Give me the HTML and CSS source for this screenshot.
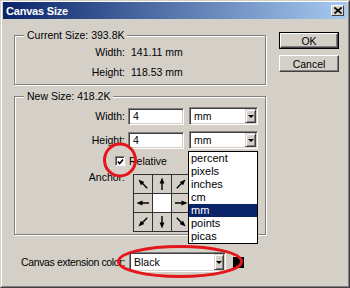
FILE: index.html
```html
<!DOCTYPE html>
<html>
<head>
<meta charset="utf-8">
<link rel="stylesheet" href="styles.css">
</head>
<body>
<div class="window">
  <div class="frame">
    <div class="titlebar">
      <span class="title">Canvas Size</span>
      <span class="close"><svg width="8" height="7" viewBox="0 0 8 7"><path d="M0.5 0.5L7.5 6.5M7.5 0.5L0.5 6.5" stroke="#000" stroke-width="1.6"/></svg></span>
    </div>
    <div class="client">
      <div class="top">
        <div class="groups">
          <div class="group cur">
            <div class="legend">Current Size: 393.8K</div>
            <div class="info"><span class="lbl">Width:</span><span class="val">141.11 mm</span></div>
            <div class="info"><span class="lbl">Height:</span><span class="val">118.53 mm</span></div>
          </div>
          <div class="group new">
            <div class="legend">New Size: 418.2K</div>
            <div class="field first"><span class="lbl">Width:</span><div class="input">4</div><div class="select unit"><span class="stext">mm</span><span class="dd"><i class="tri"></i></span></div></div>
            <div class="field"><span class="lbl">Height:</span><div class="input">4</div><div class="select unit"><span class="stext">mm</span><span class="dd"><i class="tri"></i></span>
              <ul class="list">
                <li>percent</li>
                <li>pixels</li>
                <li>inches</li>
                <li>cm</li>
                <li class="sel">mm</li>
                <li>points</li>
                <li>picas</li>
              </ul>
            </div></div>
            <div class="check"><span class="lbl"><span class="cb"><svg width="8" height="8" viewBox="0 0 8 8"><path d="M1 3.5L3 5.8L7 1.2" fill="none" stroke="#000" stroke-width="1.8"/></svg></span></span><span class="cbtext">Relative</span></div>
            <div class="anchor"><span class="lbl">Anchor:</span>
              <div class="grid">
                <div class="cell"><svg class="arrow r-nw" viewBox="0 0 18 18"><path d="M9 15V7"/><polygon points="9,2.5 6.6,8.5 11.4,8.5"/></svg></div>
                <div class="cell"><svg class="arrow r-n" viewBox="0 0 18 18"><path d="M9 15V7"/><polygon points="9,2.5 6.6,8.5 11.4,8.5"/></svg></div>
                <div class="cell"><svg class="arrow r-ne" viewBox="0 0 18 18"><path d="M9 15V7"/><polygon points="9,2.5 6.6,8.5 11.4,8.5"/></svg></div>
                <div class="cell"><svg class="arrow r-w" viewBox="0 0 18 18"><path d="M9 15V7"/><polygon points="9,2.5 6.6,8.5 11.4,8.5"/></svg></div>
                <div class="cell center"></div>
                <div class="cell"><svg class="arrow r-e" viewBox="0 0 18 18"><path d="M9 15V7"/><polygon points="9,2.5 6.6,8.5 11.4,8.5"/></svg></div>
                <div class="cell"><svg class="arrow r-sw" viewBox="0 0 18 18"><path d="M9 15V7"/><polygon points="9,2.5 6.6,8.5 11.4,8.5"/></svg></div>
                <div class="cell"><svg class="arrow r-s" viewBox="0 0 18 18"><path d="M9 15V7"/><polygon points="9,2.5 6.6,8.5 11.4,8.5"/></svg></div>
                <div class="cell"><svg class="arrow r-se" viewBox="0 0 18 18"><path d="M9 15V7"/><polygon points="9,2.5 6.6,8.5 11.4,8.5"/></svg></div>
              </div>
            </div>
          </div>
        </div>
        <div class="buttons">
          <div class="btn default"><span class="face">OK</span></div>
          <div class="btn"><span class="face">Cancel</span></div>
        </div>
      </div>
      <div class="ext">
        <span class="extlbl">Canvas extension color:</span>
        <div class="select color"><span class="stext">Black</span><span class="dd"><i class="tri"></i></span></div>
        <span class="swatch"></span>
      </div>
    </div>
  </div>
</div>
<svg class="marks" width="350" height="288" viewBox="0 0 350 288">
  <ellipse cx="120" cy="160" rx="15.5" ry="16" fill="none" stroke="#e4161c" stroke-width="3"/>
  <ellipse cx="180" cy="261.5" rx="61.5" ry="15" fill="none" stroke="#e4161c" stroke-width="3"/>
</svg>
</body>
</html>
```

FILE: styles.css
```css
* { box-sizing: border-box; }
html, body { margin: 0; padding: 0; }
body {
  position: relative;
  width: 350px;
  height: 288px;
  overflow: hidden;
  background: #d4d0c8;
  font-family: "Liberation Sans", Arial, sans-serif;
  font-size: 10.5px;
  color: #000;
}
.window {
  width: 350px;
  height: 288px;
  border: 1px solid;
  border-color: #d4d0c8 #404040 #404040 #d4d0c8;
  background: #d4d0c8;
}
.frame {
  height: 100%;
  border: 1px solid;
  border-color: #fff #808080 #808080 #fff;
  padding: 0 1px 1px 1px;
  display: flex;
  flex-direction: column;
}
.titlebar {
  height: 17px;
  flex: none;
  display: flex;
  align-items: center;
  justify-content: space-between;
  background: linear-gradient(to right, #0a246a, #a6caf0);
  padding: 0 3px 0 3px;
}
.title {
  color: #fff;
  font-weight: bold;
  font-size: 11px;
  letter-spacing: -0.2px;
}
.close {
  width: 13px;
  height: 11px;
  display: flex;
  align-items: center;
  justify-content: center;
  background: #d4d0c8;
  border: 1px solid;
  border-color: #fff #404040 #404040 #fff;
}
.client {
  flex: 1;
  padding-left: 11px;
  display: flex;
  flex-direction: column;
}
.top {
  display: flex;
  align-items: flex-start;
}
.groups {
  width: 252px;
  display: flex;
  flex-direction: column;
}
.group {
  border: 1px solid #808080;
  box-shadow: inset 1px 1px 0 #fff, 1px 1px 0 #fff;
  display: flex;
  flex-direction: column;
}
.group.cur { margin-top: 16px; padding-bottom: 2px; }
.group.new { margin-top: 11px; padding-bottom: 2px; }
.legend {
  align-self: flex-start;
  margin: -7px 0 0 9px;
  padding: 0 3px;
  line-height: 13px;
  background: #d4d0c8;
}
.lbl {
  width: 110px;
  flex: none;
  text-align: right;
}
.info {
  display: flex;
  height: 20px;
  line-height: 20px;
}
.info .val { margin-left: 6px; }
.field {
  display: flex;
  align-items: center;
  height: 18px;
  margin-top: 6px;
}
.field.first { margin-top: 4px; }
.input {
  margin-left: 3px;
  width: 56px;
  height: 17px;
  background: #fff;
  border: 1px solid;
  border-color: #808080 #fff #fff #808080;
  box-shadow: inset 1px 1px 0 #404040, inset -1px -1px 0 #d4d0c8;
  padding-left: 4px;
  line-height: 15px;
}
.select {
  position: relative;
  display: flex;
  align-items: stretch;
  background: #fff;
  border: 1px solid;
  border-color: #808080 #fff #fff #808080;
  box-shadow: inset 1px 1px 0 #404040, inset -1px -1px 0 #d4d0c8;
  padding: 1px;
}
.select.unit { margin-left: 5px; width: 69px; height: 18px; }
.stext {
  flex: 1;
  padding-left: 3px;
  line-height: 14px;
}
.dd {
  width: 11px;
  flex: none;
  background: #d4d0c8;
  border: 1px solid;
  border-color: #d4d0c8 #404040 #404040 #d4d0c8;
  box-shadow: inset 1px 1px 0 #fff, inset -1px -1px 0 #808080;
  display: flex;
  align-items: center;
  justify-content: center;
}
.tri {
  width: 0;
  height: 0;
  border-left: 3px solid transparent;
  border-right: 3px solid transparent;
  border-top: 3px solid #000;
}
.list {
  position: absolute;
  z-index: 3;
  left: -2px;
  top: 19px;
  width: 70px;
  margin: 0;
  padding: 0;
  list-style: none;
  background: #fff;
  border: 1px solid #000;
}
.list li {
  height: 13px;
  line-height: 13px;
  padding-left: 2px;
  font-size: 11px;
}
.list li.sel {
  background: #0a246a;
  color: #fff;
}
.check {
  display: flex;
  align-items: center;
  height: 12px;
  margin-top: 6px;
}
.check .lbl {
  display: flex;
  justify-content: flex-end;
}
.cb {
  width: 10px;
  height: 10px;
  background: #fff;
  border: 1px solid;
  border-color: #808080 #fff #fff #808080;
  box-shadow: inset 1px 1px 0 #404040;
  display: flex;
  align-items: center;
  justify-content: center;
  padding: 1px 0 0 1px;
}
.cbtext { margin-left: 4px; }
.anchor {
  display: flex;
  align-items: flex-start;
  margin-top: 4px;
}
.anchor .lbl { line-height: 13px; }
.grid {
  margin: 3px 0 0 8px;
  display: grid;
  grid-template-columns: repeat(3, 18px);
  grid-template-rows: repeat(3, 18px);
  gap: 1px;
  padding: 1px;
  background: #303030;
}
.cell {
  background: #d4d0c8;
  display: flex;
  align-items: center;
  justify-content: center;
}
.cell.center { background: #fff; }
.arrow {
  width: 18px;
  height: 18px;
}
.arrow path { stroke: #000; stroke-width: 1.4; fill: none; }
.arrow polygon { fill: #000; }
.r-n { transform: rotate(0deg); }
.r-ne { transform: rotate(45deg); }
.r-e { transform: rotate(90deg); }
.r-se { transform: rotate(135deg); }
.r-s { transform: rotate(180deg); }
.r-sw { transform: rotate(-135deg); }
.r-w { transform: rotate(-90deg); }
.r-nw { transform: rotate(-45deg); }
.buttons {
  margin: 13px 0 0 13px;
  display: flex;
  flex-direction: column;
  gap: 6px;
}
.btn {
  width: 60px;
  height: 17px;
  border: 1px solid;
  border-color: #fff #404040 #404040 #fff;
  box-shadow: inset -1px -1px 0 #808080;
  display: flex;
}
.btn .face {
  flex: 1;
  display: flex;
  align-items: center;
  justify-content: center;
}
.btn.default {
  border: 1px solid #000;
  box-shadow: none;
}
.btn.default .face {
  border: 1px solid;
  border-color: #fff #404040 #404040 #fff;
  box-shadow: inset -1px -1px 0 #808080;
}
.ext {
  display: flex;
  align-items: center;
  margin-top: 17px;
  height: 20px;
}
.extlbl {
  margin-left: 7px;
  width: 108px;
  flex: none;
  white-space: nowrap;
  letter-spacing: -0.35px;
}
.select.color {
  width: 97px;
  height: 20px;
}
.select.color .stext { line-height: 16px; }
.select.color .dd { width: 10px; }
.swatch {
  margin-left: 7px;
  width: 11px;
  height: 11px;
  background: #000;
}
.marks {
  position: absolute;
  left: 0;
  top: 0;
  pointer-events: none;
  z-index: 5;
}
```
